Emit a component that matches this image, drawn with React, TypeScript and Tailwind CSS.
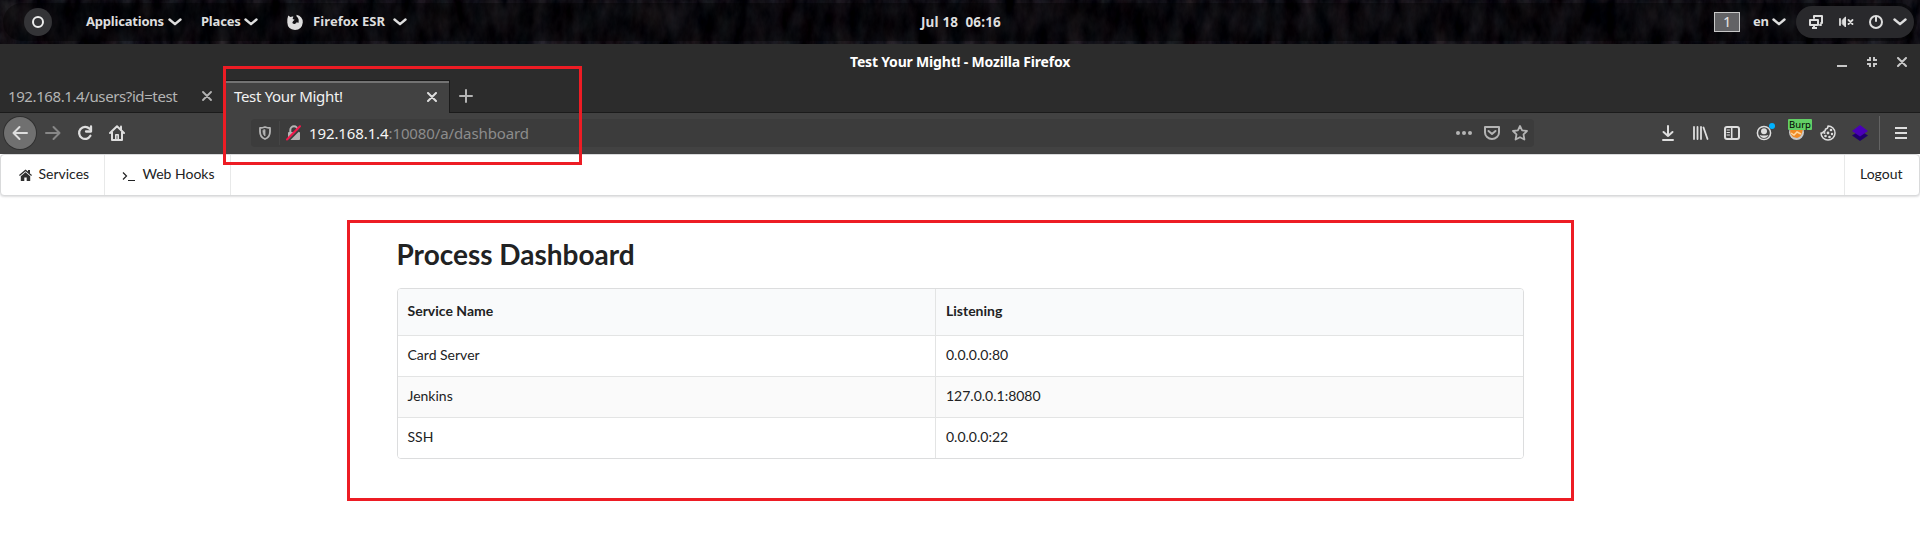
import React from "react";

type IconProps = { className?: string; children?: React.ReactNode; w?: number; h?: number; sw?: number };

function Icon({ className = "", children, w = 16, h = 16, sw = 2 }: IconProps) {
  return (
    <svg width={w} height={h} viewBox={`0 0 ${w} ${h}`} fill="none" stroke="currentColor" strokeWidth={sw} strokeLinecap="round" strokeLinejoin="round" className={`shrink-0 ${className}`}>
      {children}
    </svg>
  );
}

const Chevron = ({ className = "" }: { className?: string }) => (
  <Icon w={14} h={8} sw={2.4} className={className}><path d="M1.5 1.5 7 6.2l5.5-4.7" /></Icon>
);

const Wallpaper = () => (
  <svg className="absolute inset-0 h-full w-full" aria-hidden="true">
    <filter id="bark" x="0" y="0" width="100%" height="100%" colorInterpolationFilters="sRGB">
      <feTurbulence type="fractalNoise" baseFrequency="0.06 0.03" numOctaves="5" seed="8" />
      <feColorMatrix values="0.26 0.08 0 0 -0.112  0.26 0 0 0 -0.08  0.26 0 0.04 0 -0.075  0 0 0 0 1" />
    </filter>
    <rect width="100%" height="100%" filter="url(#bark)" />
  </svg>
);

function TopBar() {
  return (
    <header className="relative h-11 shrink-0 overflow-hidden bg-[#0c0b0f] text-[13px] font-bold text-[#dedede]">
      <Wallpaper />
      <div className="absolute inset-x-[3px] inset-y-[3px] rounded-full bg-black/40" />
      <div className="relative flex h-full items-center">
        <div className="ml-[24px] flex size-7 items-center justify-center rounded-full bg-[#343437]">
          <div className="size-3 rounded-full border-[2.5px] border-[#eeeeee]" />
        </div>
        <span className="ml-[34px] w-[82px] whitespace-nowrap tracking-[-0.2px]">Applications</span>
        <Chevron />
        <span className="ml-[19px] w-[43px] whitespace-nowrap tracking-[-0.2px]">Places</span>
        <Chevron />
        <svg width="16" height="16" viewBox="0 0 16 16" className="ml-[29px] shrink-0" fill="#dedede">
          <path d="M1.2 1.4 3.4 3Q5 2 6.4 2.600L5.600 5l2 .7L6 7.300 5.300 9q2 2 4.300.3L8 9.600l2-1.300 1.400.8Q12.600 5 9.600 2.600L9.400.8Q15.900 2.500 15.800 8.400 15 15.500 8 15.900.6 15.300.3 8.400.2 4 1.200 1.400Z" />
        </svg>
        <span className="ml-[10px] w-[80px] whitespace-nowrap tracking-[0.1px]">Firefox ESR</span>
        <Chevron />
        <span className="ml-[514px] w-[788px] whitespace-pre text-[13.5px] tracking-[0.15px]">Jul 18  06:16</span>
        <div className="ml-[5px] flex h-5 w-[26px] items-center justify-center border border-[#c8c8c8] bg-[#626265] text-[13.5px] font-medium">1</div>
        <span className="ml-[13px] w-[19px] tracking-[-0.2px]">en</span>
        <Chevron />
        <div className="ml-[10px] flex h-8 w-[118px] items-center rounded-full bg-[#29292c] pl-[13px]">
          <Icon w={14} h={14}>
            <path d="M5 3V1h8v7h-1M11 10h1" />
            <path d="M1 5h8v5H1ZM5 10v3M3 13h5" strokeLinecap="butt" />
          </Icon>
          <Icon w={15} h={14} sw={1.8} className="ml-4">
            <path d="M1 4v6" /><path d="M3.500 5 6.500 2v10l-3-3Z" fill="currentColor" strokeWidth="1" /><path d="m9.500 5 4 4m0-4-4 4" />
          </Icon>
          <Icon w={14} h={14} className="ml-[15px]"><circle cx="7" cy="7" r="6" /><path d="M7 2v4" /></Icon>
          <Chevron className="ml-[10px]" />
        </div>
      </div>
    </header>
  );
}

function TitleBar() {
  return (
    <div className="flex h-9 shrink-0 items-center text-[#c8c8c8]">
      <div className="w-[850px]" />
      <span className="w-[220px] whitespace-nowrap pb-[2px] text-[14px] font-bold tracking-[-0.19px] text-white">Test Your Might! - Mozilla Firefox</span>
      <div className="ml-[767px] flex items-center">
        <Icon w={10} h={10}><path d="M0 9h10" strokeLinecap="butt" /></Icon>
        <Icon w={10} h={10} className="ml-5"><path d="M0 3h3V0M7 0v3h3M10 7H7v3M3 10V7H0" strokeLinecap="butt" strokeLinejoin="miter" /></Icon>
        <Icon w={10} h={10} className="ml-5"><path d="m1 1 8 8M9 1 1 9" /></Icon>
      </div>
    </div>
  );
}

function Tabs() {
  return (
    <div className="flex h-[33px] shrink-0 border-b border-[#1b1b1b] text-[15px] text-[#b4b4b4]">
      <div className="flex w-[226px] items-center pl-2">
        <span className="w-[194px] whitespace-nowrap tracking-[-0.4px]">192.168.1.4/users?id=test</span>
        <Icon w={10} h={10} sw={1.8}><path d="m1 1 8 8M9 1 1 9" /></Icon>
      </div>
      <div className="-mb-px flex w-[224px] items-center border-r border-t border-[#1b1b1b] bg-[#424242] pb-px pl-2 text-[#f2f2f2] shadow-[inset_0_2px_0_#737373]">
        <span className="w-[193px] whitespace-nowrap tracking-[-0.32px]">Test Your Might!</span>
        <Icon w={10} h={10} className="text-[#dedede]"><path d="m1 1 8 8M9 1 1 9" /></Icon>
      </div>
      <Icon w={14} h={14} className="ml-[9px] mt-[9px]"><path d="M7 1v12M1 7h12" /></Icon>
    </div>
  );
}

function Toolbar() {
  return (
    <div className="flex h-[41px] shrink-0 items-center bg-[#424242] pb-px text-[#dedede]">
      <div className="ml-1 flex size-8 items-center justify-center rounded-full bg-[#707070] ring-1 ring-[#303030]">
        <Icon><path d="M15 8H1.500M7.500 2l-6 6 6 6" /></Icon>
      </div>
      <Icon className="ml-[9px] text-[#878787]"><path d="M1 8h13.500M8.500 2l6 6-6 6" /></Icon>
      <Icon className="ml-[16px]" sw={2.3}><path d="M13.400 10.800A6 6 0 1 1 12.500 3.800M14 1.500v5H9" /></Icon>
      <Icon className="ml-4"><path d="M1 8 8 1.300 15 8M3 7v8h10V7" /><path d="M6.800 14.500V9.800h2.400v4.700" strokeWidth="1.600" /><path d="M12 1.500v3" /></Icon>
      <div className="ml-[126px] flex h-7 w-[1283px] items-center rounded-[4px] bg-[#3c3c3c] text-[#b4b4b4]">
        <Icon w={12} h={14} className="ml-2" sw={1.800}><path d="M6 1Q3.500 2 1 2v3.700Q1 11 6 13q5-2 5-7.300V2Q8.500 2 6 1Z" /><path d="M6 4v6Q4 8.500 4 5.800V4.500Z" fill="currentColor" strokeWidth=".8" /></Icon>
        <div className="ml-[8px] h-6 w-px bg-[#454545]" />
        <svg width="16" height="16" viewBox="0 0 16 16" className="ml-[6px]" fill="none">
          <path d="M4.300 8V5a3.700 3.700 0 0 1 7.400 0v3" stroke="#b4b4b4" strokeWidth="2" />
          <rect x="2" y="7" width="12" height="8" rx="1" fill="#b4b4b4" />
          <path d="M2 16 16 2" stroke="#3c3c3c" strokeWidth="2" />
          <path d="M1 14.500 14 1.200" stroke="#f3174b" strokeWidth="2" strokeLinecap="round" />
        </svg>
        <span className="ml-[7px] w-[1147px] whitespace-nowrap text-[15px] tracking-[-0.11px] text-[#8c8c8c]"><span className="text-[#f5f5f5]">192.168.1.4</span>:10080/a/dashboard</span>
        <Icon w={16} h={4} sw={0}><g fill="currentColor"><circle cx="2" cy="2" r="2" /><circle cx="8" cy="2" r="2" /><circle cx="14" cy="2" r="2" /></g></Icon>
        <Icon className="ml-3" h={14}><path d="M1 1h14v5.500a7 6.500 0 0 1-14 0Z" /><path d="m4.500 5 3.500 3 3.500-3" /></Icon>
        <Icon className="ml-3" sw={1.800}><path d="m8 1 2.100 4.400 4.900.6-3.500 3.400.9 5.100L8 12.200l-4.400 2.300.9-5.100L1 6l4.900-.6Z" /></Icon>
      </div>
      <Icon w={12} h={16} className="ml-[128px]"><path d="M6 1v10M1.500 7 6 11l4.500-4M1 15h10" /></Icon>
      <Icon className="ml-[19px]" w={16} h={14} sw={2}><path d="M1 1v12M4.500 1v12M8 1v12M10.500 1.500 14.500 13" strokeWidth="1.800" /></Icon>
      <Icon className="ml-[15px]" h={14}><rect x="1" y="1" width="14" height="12" rx="2" /><path d="M7.700 1v12" strokeWidth="1.600" /><path d="M3 4h2.500M3 6.500h2.500M3 9h2.500" strokeWidth="1" /></Icon>
      <div className="relative ml-4 size-4">
        <Icon sw={1.500}><circle cx="8" cy="8" r="6.600" /><circle cx="8" cy="6.200" r="3" fill="currentColor" stroke="none" /><path d="M3.500 10q4.500 1 9 0-1.500 3-4.500 3t-4.500-3Z" fill="currentColor" stroke="none" /></Icon>
        <div className="absolute -right-[3px] -top-[2px] size-[6px] rounded-full bg-[#00b3ff]" />
      </div>
      <div className="relative ml-4 size-4">
        <svg width="16" height="16" viewBox="0 0 16 16"><circle cx="8.500" cy="7.500" r="7.500" fill="#c9c9c9" /><path d="M2 4h13l-1 4q-1 4-5 5l-4-1L2.500 9Z" fill="#f08a24" /><path d="m3 8 3 2 3-3 4 2" stroke="#ffd7a0" strokeWidth="1.500" fill="none" /></svg>
        <div className="absolute left-0 -top-[6px] flex h-[11px] w-6 items-center justify-center rounded-[1px] bg-[#62cf66] text-[9.500px] leading-none text-black">Burp</div>
      </div>
      <Icon className="ml-4" sw={1.500}><path d="M8 1a7 7 0 1 0 7 7q-2 .5-2.500-1.500-2 0-2-2.500Q8 4 8 1Z" transform="matrix(-1 0 0 1 16 0)" /><g fill="currentColor" stroke="none"><circle cx="8" cy="8" r="1.400" /><circle cx="11" cy="5" r="1.300" /><circle cx="12" cy="9" r="1.200" /><circle cx="9.500" cy="12" r="1.300" /><circle cx="5.500" cy="11" r="1.300" /><circle cx="4.500" cy="8" r="1" /></g></Icon>
      <svg width="16" height="16" viewBox="0 0 16 16" className="ml-4"><path d="m0 10.500 8-5 8 5L8 16Z" fill="#20006c" /><path d="M0 6 8 0l8 6-8 5.500Z" fill="#4a00b8" /></svg>
      <div className="ml-[11px] h-[34px] w-px bg-[#636363]" />
      <Icon w={12} h={12} className="ml-[15px]"><path d="M0 1h12M0 6h12M0 11h12" strokeLinecap="butt" /></Icon>
    </div>
  );
}

function SiteMenu() {
  return (
    <nav className="flex h-[42px] shrink-0 rounded-[4px] border border-[#d9dadb] bg-white text-[14px] shadow-[0_1px_2px_rgba(34,36,38,0.15)]">
      <a className="flex w-[104px] items-center border-r border-[#e8e9e9] pl-[18px]">
        <svg width="13" height="12" viewBox="0 0 13 12" fill="#303030"><path d="M6.500.4 9 2.600V1h2v3.400L13 6l-.8.9L6.500 2.200.8 6.900 0 6Z" /><path d="m6.500 3.300 4.700 3.900V12H7.700V8.500H5.300V12H1.800V7.200Z" /></svg>
        <span className="ml-[6.5px] pb-1">Services</span>
      </a>
      <a className="flex w-[126px] items-center border-r border-[#e8e9e9] pl-[17px]">
        <Icon w={14} h={12} sw={1.200} className="mt-1"><path d="m1 1.500 3.500 3.500L1 8.500M6 9.500h7" strokeLinecap="butt" strokeLinejoin="miter" /></Icon>
        <span className="ml-[6.5px] pb-1">Web Hooks</span>
      </a>
      <a className="ml-auto flex w-[75px] items-center border-l border-[#e8e9e9] pb-1 pl-[15px]">Logout</a>
    </nav>
  );
}

const services = [
  ["Card Server", "0.0.0.0:80"],
  ["Jenkins", "127.0.0.1:8080"],
  ["SSH", "0.0.0.0:22"],
];

function Dashboard() {
  return (
    <main className="ml-[347px] mt-6 h-[281px] w-[1227px] border-[3px] border-[#ed1c24] pl-[47px] pt-[13px]">
      <h1 className="-ml-[0.5px] h-[52px] text-[28px] font-bold leading-[36px]">Process Dashboard</h1>
      <div className="w-[1127px] overflow-hidden rounded-[4px] border border-[#dcddde] text-[14px]">
        <div className="flex h-[46px] bg-[#f9fafb] font-bold">
          <div className="flex w-[538px] items-center border-r border-[#e3e4e4] pb-1 pl-[9.5px]">Service Name</div>
          <div className="flex items-center pb-1 pl-[10px]">Listening</div>
        </div>
        {services.map(([name, address]) => (
          <div key={name} className="flex h-[41px] border-t border-[#e3e4e4] even:bg-white odd:bg-[#fafafa]">
            <div className="flex w-[538px] items-center border-r border-[#e3e4e4] pb-[3px] pl-[9.5px]">{name}</div>
            <div className="flex items-center pb-[3px] pl-[10px]">{address}</div>
          </div>
        ))}
      </div>
    </main>
  );
}

export default function App() {
  return (
    <div className="relative flex h-[536px] w-[1920px] flex-col overflow-hidden bg-white">
      <div className="flex flex-col bg-[#2c2c2c] font-['Noto_Sans',sans-serif]">
        <TopBar />
        <TitleBar />
        <Tabs />
        <Toolbar />
      </div>
      <div className="flex flex-col font-['Lato',sans-serif] text-[#212223]">
        <SiteMenu />
        <Dashboard />
      </div>
      <div className="pointer-events-none absolute left-[223px] top-[66px] h-[99px] w-[359px] border-[3px] border-[#ed1c24]" />
    </div>
  );
}
